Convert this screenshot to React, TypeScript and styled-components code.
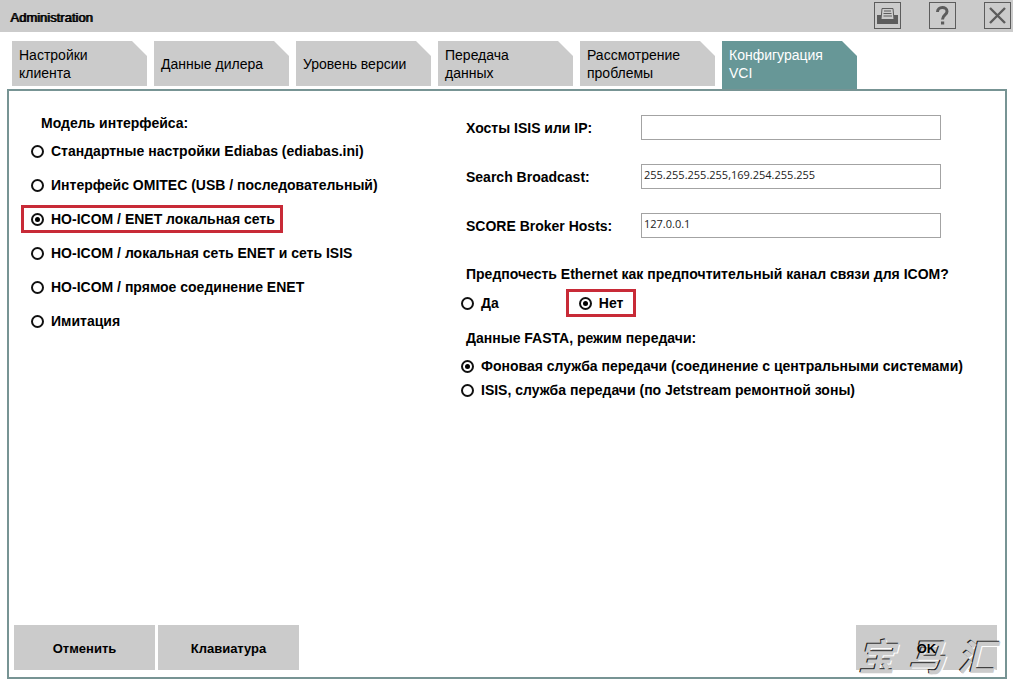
import React, { useState } from 'react';
import styled, { createGlobalStyle } from 'styled-components';

const GREY = '#cbcbcb';
const TEAL = '#679797';
const FRAME = '#779494';
const RED = '#c82a37';

const Global = createGlobalStyle`
  *, *::before, *::after { box-sizing: border-box; }
  body {
    margin: 0;
    background: #fff;
    color: #000;
    font-family: "Liberation Sans", Arial, sans-serif;
    font-size: 14px;
    line-height: 18px;
  }
`;

const Window = styled.div`
  min-height: 100vh;
  display: flex;
  flex-direction: column;
`;

const TitleBar = styled.header`
  display: flex;
  align-items: center;
  height: 32px;
  padding: 0 2px 0 10px;
  background: ${GREY};
`;

const Title = styled.h1`
  flex: 1;
  margin: 0;
  padding-top: 3px;
  font-size: 13px;
  font-weight: 400;
  text-shadow: 1px 0 #000;
`;

const Tools = styled.div`
  display: flex;
  gap: 28px;
  padding-bottom: 1px;
`;

const ToolButton = styled.button`
  width: 27px;
  height: 27px;
  padding: 0;
  border: 1px solid #5c5c5c;
  background: transparent;
  svg { display: block; }
`;

const Tabs = styled.nav`
  display: flex;
  align-items: flex-start;
  gap: 7px;
  padding: 9px 12px 0;
  height: 57px;
`;

const Tab = styled.button<{ $active?: boolean }>`
  width: 135px;
  height: ${p => (p.$active ? 48 : 45)}px;
  padding: 0 15px ${p => (p.$active ? 3 : 0)}px 7px;
  display: flex;
  align-items: center;
  border: 0;
  background: ${p => (p.$active ? TEAL : GREY)};
  color: ${p => (p.$active ? '#fff' : '#000')};
  font: inherit;
  text-align: left;
  white-space: pre-line;
  clip-path: polygon(0 0, calc(100% - 15px) 0, 100% 15px, 100% 100%, 0 100%);
`;

const Panel = styled.form`
  flex: 1;
  display: flex;
  flex-direction: column;
  margin: 0 6px 4px 7px;
  border: 2px solid ${FRAME};
`;

const Columns = styled.div`
  flex: 1;
  display: grid;
  grid-template-columns: 440px minmax(0, 1fr);
  padding: 0 12px;
  font-weight: 700;
`;

const Group = styled.fieldset`
  min-width: 0;
  margin: 0;
  padding: 0;
  border: 0;
`;

const Legend = styled.legend`
  padding: 0 0 0 5px;
`;

const ModelGroup = styled(Group)`
  legend { padding: 23px 0 0 20px; }
`;

const ModelList = styled.div`
  display: flex;
  flex-direction: column;
  align-items: flex-start;
  gap: 6px;
  padding-top: 5px;
`;

const Choice = styled.label<{ $marked?: boolean; $wide?: boolean }>`
  display: inline-flex;
  align-items: center;
  gap: 7px;
  height: 28px;
  padding: 0 ${p => (p.$wide ? 10 : 5)}px 0 ${p => (p.$wide ? 10 : 7)}px;
  border: 3px solid ${p => (p.$marked ? RED : 'transparent')};
  white-space: nowrap;
`;

const Radio = styled.input.attrs({ type: 'radio' })`
  appearance: none;
  flex: none;
  display: grid;
  place-items: center;
  width: 13px;
  height: 13px;
  margin: 0;
  border: 2px solid #111;
  border-radius: 50%;
  background: #fff;
  &:checked::before {
    content: '';
    width: 5px;
    height: 5px;
    border-radius: 50%;
    background: #000;
  }
`;

const Settings = styled.div`
  padding-top: 24px;
`;

const Field = styled.div`
  display: grid;
  grid-template-columns: 175px minmax(0, 300px);
  align-items: center;
  margin: 0 0 24px 5px;
`;

const Input = styled.input`
  width: 100%;
  height: 25px;
  padding: 0 2px 5px;
  border: 1px solid #a3a3a3;
  border-radius: 0;
  background: #fff;
  color: #222;
  font: 11px/16px "Open Sans", "Segoe UI", sans-serif;
`;

const YesNo = styled.div`
  display: flex;
  gap: 59px;
  padding-top: 6px;
  margin-left: -10px;
`;

const Modes = styled.div`
  display: flex;
  flex-direction: column;
  align-items: flex-start;
  padding-top: 7px;
  margin-left: -10px;
  label { height: 24px; }
`;

const EthernetGroup = styled(Group)`
  margin-top: 27px;
`;

const ModeGroup = styled(Group)`
  margin-top: 12px;
`;

const Actions = styled.footer`
  display: flex;
  gap: 3px;
  padding: 0 8px 7px 5px;
`;

const Action = styled.button`
  width: 141px;
  height: 45px;
  padding: 2px 0 0;
  border: 0;
  background: ${GREY};
  color: #000;
  font: 700 13px/18px "Liberation Sans", Arial, sans-serif;
`;

const Confirm = styled.div`
  position: relative;
  margin-left: auto;
  background: ${GREY};
  button {
    position: relative;
    background: transparent;
  }
`;

const Watermark = styled.div`
  position: absolute;
  top: 15px;
  left: 2px;
  display: flex;
  gap: 13px;
  color: ${GREY};
  font: italic 700 37px/30px "Noto Sans CJK SC", sans-serif;
  text-shadow: -1px -1px #222, 1px 1px #fff;
  pointer-events: none;
`;

const PrintIcon = () => (
  <svg width="25" height="25" viewBox="0 0 25 25" aria-hidden="true">
    <path d="M2 12h4v6h13v-6h4v9H2z" fill="#5c5c5c" />
    <path d="M7 5.500h11l1 11H6z" fill="#cbcbcb" stroke="#5c5c5c" />
    <path d="M9 8h7M8.500 10.500h8M8.500 13h8.500" stroke="#5c5c5c" strokeWidth="1.200" />
    <path d="M2 16.500h21V21H2z" fill="#5c5c5c" />
  </svg>
);

const HelpIcon = () => (
  <svg width="25" height="25" viewBox="0 0 25 25" aria-hidden="true">
    <path d="M7.500 9C7.500 3 17 3 17 8.500c0 3.500-4.500 3.500-4.500 8" fill="none" stroke="#5c5c5c" strokeWidth="3" />
    <path d="M11 18.500h3.200v3H11z" fill="#5c5c5c" />
  </svg>
);

const CloseIcon = () => (
  <svg width="25" height="25" viewBox="0 0 25 25" aria-hidden="true">
    <path d="M5 5l15 15M20 5L5 20" stroke="#5c5c5c" strokeWidth="2.400" />
  </svg>
);

const TABS = [
  'Настройки\nклиента',
  'Данные дилера',
  'Уровень версии',
  'Передача\nданных',
  'Рассмотрение\nпроблемы',
  'Конфигурация\nVCI',
];

const MODELS = [
  'Стандартные настройки Ediabas (ediabas.ini)',
  'Интерфейс OMITEC (USB / последовательный)',
  'HO-ICOM / ENET локальная сеть',
  'HO-ICOM / локальная сеть ENET и сеть ISIS',
  'HO-ICOM / прямое соединение ENET',
  'Имитация',
];

const FIELDS = [
  { id: 'isis', label: 'Хосты ISIS или IP:', value: '' },
  { id: 'broadcast', label: 'Search Broadcast:', value: '255.255.255.255,169.254.255.255' },
  { id: 'score', label: 'SCORE Broker Hosts:', value: '127.0.0.1' },
];

const MODES = [
  'Фоновая служба передачи (соединение с центральными системами)',
  'ISIS, служба передачи (по Jetstream ремонтной зоны)',
];

export default function App() {
  const [tab, setTab] = useState(5);
  return (
    <Window>
      <Global />
      <TitleBar>
        <Title>Administration</Title>
        <Tools>
          <ToolButton type="button" aria-label="Печать"><PrintIcon /></ToolButton>
          <ToolButton type="button" aria-label="Справка"><HelpIcon /></ToolButton>
          <ToolButton type="button" aria-label="Закрыть"><CloseIcon /></ToolButton>
        </Tools>
      </TitleBar>
      <Tabs>
        {TABS.map((name, i) => (
          <Tab key={name} type="button" $active={i === tab} onClick={() => setTab(i)}>{name}</Tab>
        ))}
      </Tabs>
      <Panel onSubmit={e => e.preventDefault()}>
        <Columns>
          <ModelGroup>
            <Legend>Модель интерфейса:</Legend>
            <ModelList>
              {MODELS.map((name, i) => (
                <Choice key={name} $marked={i === 2}>
                  <Radio name="model" defaultChecked={i === 2} />
                  {name}
                </Choice>
              ))}
            </ModelList>
          </ModelGroup>
          <Settings>
            {FIELDS.map(f => (
              <Field key={f.id}>
                <label htmlFor={f.id}>{f.label}</label>
                <Input id={f.id} type="text" defaultValue={f.value} />
              </Field>
            ))}
            <EthernetGroup>
              <Legend>Предпочесть Ethernet как предпочтительный канал связи для ICOM?</Legend>
              <YesNo>
                <Choice><Radio name="ethernet" />Да</Choice>
                <Choice $marked $wide><Radio name="ethernet" defaultChecked />Нет</Choice>
              </YesNo>
            </EthernetGroup>
            <ModeGroup>
              <Legend>Данные FASTA, режим передачи:</Legend>
              <Modes>
                {MODES.map((name, i) => (
                  <Choice key={name}>
                    <Radio name="mode" defaultChecked={i === 0} />
                    {name}
                  </Choice>
                ))}
              </Modes>
            </ModeGroup>
          </Settings>
        </Columns>
        <Actions>
          <Action type="button">Отменить</Action>
          <Action type="button">Клавиатура</Action>
          <Confirm>
            <Watermark aria-hidden="true">
              <span>宝</span>
              <span>马</span>
              <span>汇</span>
            </Watermark>
            <Action type="submit">OK</Action>
          </Confirm>
        </Actions>
      </Panel>
    </Window>
  );
}
